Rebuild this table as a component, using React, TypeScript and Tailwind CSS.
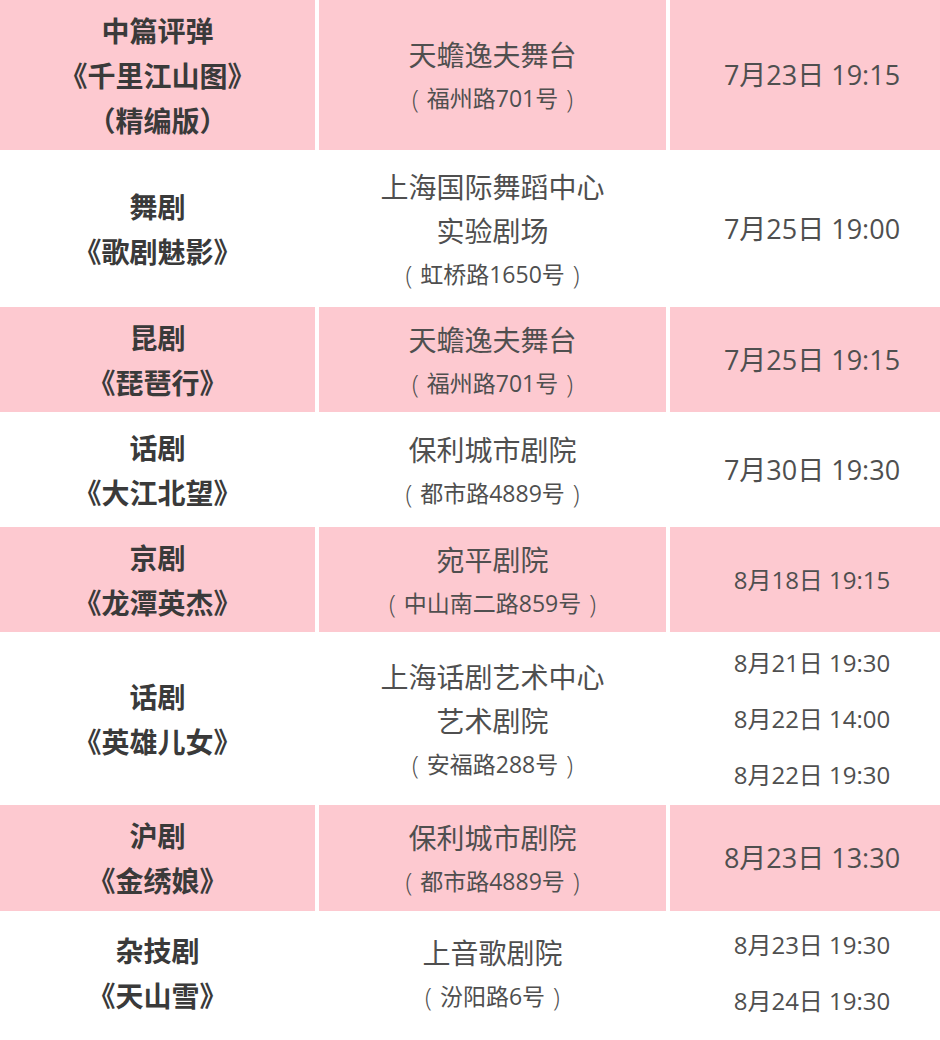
import React from "react";

type Show = {
  kind: string;
  title: string[];
  venue: string[];
  address: string;
  times: string[];
  big: boolean;
  pink: boolean;
  height: string;
};

const shows: Show[] = [
  { kind: "中篇评弹", title: ["《千里江山图》", "（精编版）"], venue: ["天蟾逸夫舞台"], address: "福州路701号", times: ["7月23日 19:15"], big: true, pink: true, height: "h-[150px]" },
  { kind: "舞剧", title: ["《歌剧魅影》"], venue: ["上海国际舞蹈中心", "实验剧场"], address: "虹桥路1650号", times: ["7月25日 19:00"], big: true, pink: false, height: "h-[153px]" },
  { kind: "昆剧", title: ["《琵琶行》"], venue: ["天蟾逸夫舞台"], address: "福州路701号", times: ["7月25日 19:15"], big: true, pink: true, height: "h-[105px]" },
  { kind: "话剧", title: ["《大江北望》"], venue: ["保利城市剧院"], address: "都市路4889号", times: ["7月30日 19:30"], big: true, pink: false, height: "h-[111px]" },
  { kind: "京剧", title: ["《龙潭英杰》"], venue: ["宛平剧院"], address: "中山南二路859号", times: ["8月18日 19:15"], big: false, pink: true, height: "h-[105px]" },
  { kind: "话剧", title: ["《英雄儿女》"], venue: ["上海话剧艺术中心", "艺术剧院"], address: "安福路288号", times: ["8月21日 19:30", "8月22日 14:00", "8月22日 19:30"], big: false, pink: false, height: "h-[169px]" },
  { kind: "沪剧", title: ["《金绣娘》"], venue: ["保利城市剧院"], address: "都市路4889号", times: ["8月23日 13:30"], big: true, pink: true, height: "h-[106px]" },
  { kind: "杂技剧", title: ["《天山雪》"], venue: ["上音歌剧院"], address: "汾阳路6号", times: ["8月23日 19:30", "8月24日 19:30"], big: false, pink: false, height: "h-[120px]" },
];

export default function App() {
  return (
    <div className="w-[940px] min-h-[1040px] bg-white overflow-hidden font-['Noto_Sans_CJK_SC','Noto_Sans',sans-serif]">
      <div className="flex flex-col gap-y-[2px]">
        {shows.map((s, i) => {
          const cell = s.pink ? "bg-[#fdc9d0]" : "bg-white";
          return (
            <div key={i} className={`grid grid-cols-[315px_347px_1fr] gap-x-[4px] ${s.height}`}>
              {/* show name */}
              <div className={`${cell} flex flex-col items-center justify-center text-[28px] leading-[45px] font-bold text-[#3a3a3a]`}>
                <div>{s.kind}</div>
                {s.title.map((t) => (
                  <div key={t}>{t}</div>
                ))}
              </div>
              {/* venue */}
              <div className={`${cell} flex flex-col items-center justify-center text-[#4f4f4f] pt-[2px]`}>
                {s.venue.map((v) => (
                  <div key={v} className="text-[28px] leading-[44px]">{v}</div>
                ))}
                <div className="flex items-center text-[23px] leading-[44px] font-['Open_Sans','Noto_Sans_CJK_SC',sans-serif]">
                  <span className="text-[25px] font-light mr-[8px]">(</span>
                  <span>{s.address}</span>
                  <span className="text-[25px] font-light ml-[8px]">)</span>
                </div>
              </div>
              {/* dates */}
              <div className={`${cell} flex flex-col items-center justify-center pl-[14px] text-[#4f4f4f] font-['Open_Sans','Noto_Sans_CJK_SC',sans-serif]`}>
                {s.times.map((t) => (
                  <div key={t} className={s.big ? "text-[27px] leading-[56px]" : "text-[24px] leading-[56px]"}>
                    {t}
                  </div>
                ))}
              </div>
            </div>
          );
        })}
      </div>
    </div>
  );
}
